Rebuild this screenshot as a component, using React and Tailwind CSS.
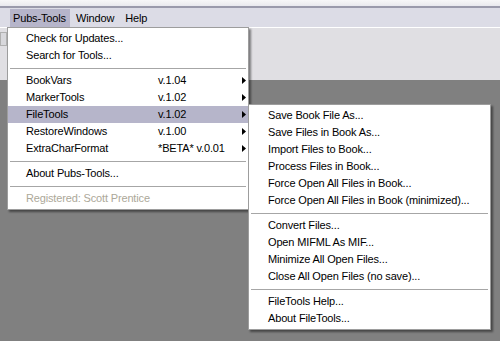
import React from 'react';

const mainItems = [
  { label: 'Check for Updates...' },
  { label: 'Search for Tools...' },
  { sep: true },
  { label: 'BookVars', ver: 'v.1.04', sub: true },
  { label: 'MarkerTools', ver: 'v.1.02', sub: true },
  { label: 'FileTools', ver: 'v.1.02', sub: true, active: true },
  { label: 'RestoreWindows', ver: 'v.1.00', sub: true },
  { label: 'ExtraCharFormat', ver: '*BETA* v.0.01', sub: true },
  { sep: true },
  { label: 'About Pubs-Tools...' },
  { sep: true },
  { label: 'Registered: Scott Prentice', disabled: true },
];

const fileToolsItems = [
  { label: 'Save Book File As...' },
  { label: 'Save Files in Book As...' },
  { label: 'Import Files to Book...' },
  { label: 'Process Files in Book...' },
  { label: 'Force Open All Files in Book...' },
  { label: 'Force Open All Files in Book (minimized)...' },
  { sep: true },
  { label: 'Convert Files...' },
  { label: 'Open MIFML As MIF...' },
  { label: 'Minimize All Open Files...' },
  { label: 'Close All Open Files (no save)...' },
  { sep: true },
  { label: 'FileTools Help...' },
  { label: 'About FileTools...' },
];

function Arrow() {
  return (
    <svg width="4" height="7" viewBox="0 0 4 7" className="block">
      <path d="M0 0 L4 3.5 L0 7 Z" fill="#000" />
    </svg>
  );
}

function Separator() {
  return (
    <div className="h-[8px] flex items-center px-[2px]">
      <div className="w-full h-px bg-[#a6a6a6]" />
    </div>
  );
}

function MenuRow({ item, indent }) {
  return (
    <div
      className={`h-[17px] flex items-center ${indent} ${item.active ? 'bg-[#b6b5ca]' : ''} ${
        item.disabled ? 'text-[#aca899]' : 'text-black'
      }`}
    >
      <span className="w-[132px] whitespace-nowrap">{item.label}</span>
      {item.ver && <span className="w-[84px] whitespace-nowrap">{item.ver}</span>}
      {item.sub && <Arrow />}
    </div>
  );
}

export default function App() {
  return (
    <div
      className="relative w-[500px] h-[341px] overflow-hidden bg-[#808080] flex flex-col text-[11px] leading-none tracking-[-0.15px]"
      style={{ fontFamily: '"Liberation Sans", Arial, sans-serif' }}
    >
      {/* title strip */}
      <div className="h-[6px] bg-gradient-to-b from-[#f7f7f8] to-[#e9e9ee]" />
      <div className="h-[2px] bg-[#9a9aab]" />

      {/* menubar */}
      <div className="h-[19px] bg-[#dcdce6] flex items-end pl-[10px] whitespace-nowrap">
        <div className="h-[18px] w-[60px] pl-[3px] flex items-center bg-[#b6b5ca]">Pubs-Tools</div>
        <div className="h-[18px] pl-[6px] pr-[11px] flex items-center">Window</div>
        <div className="h-[18px] flex items-center">Help</div>
      </div>
      <div className="h-px bg-white" />

      {/* toolbar */}
      <div className="h-[52px] bg-[#e0dfe3] relative">
        <div className="absolute left-0 top-[4px] w-[7px] h-[14px] border border-[#b0b0b0] bg-[#d8d8dc]" />
      </div>

      {/* workspace */}
      <div className="flex-1 bg-[#808080]" />

      {/* Pubs-Tools dropdown */}
      <div className="absolute left-[7px] top-[27px] w-[242px] bg-white border border-[#9d9d9d] py-[2px] shadow-[2px_2px_2px_rgba(0,0,0,0.45)]">
        {mainItems.map((item, i) =>
          item.sep ? <Separator key={i} /> : <MenuRow key={i} item={item} indent="pl-[18px]" />
        )}
      </div>

      {/* FileTools submenu */}
      <div className="absolute left-[248px] top-[104px] w-[243px] bg-white border border-[#9d9d9d] py-[2px] shadow-[2px_2px_2px_rgba(0,0,0,0.45)]">
        {fileToolsItems.map((item, i) =>
          item.sep ? <Separator key={i} /> : <MenuRow key={i} item={item} indent="pl-[19px]" />
        )}
      </div>
    </div>
  );
}
